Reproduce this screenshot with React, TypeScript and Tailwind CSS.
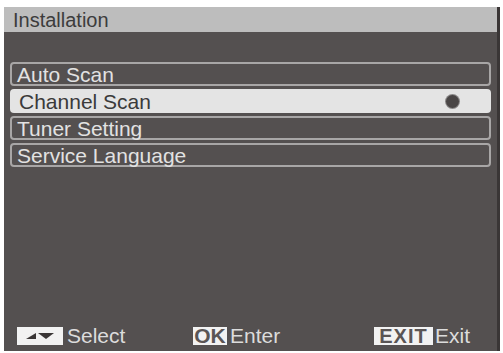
import React from 'react';

const items = ['Auto Scan', 'Channel Scan', 'Tuner Setting', 'Service Language'];
const selected = 1;

function Key({ children, className }: { children: React.ReactNode; className: string }) {
  return (
    <span className={`flex items-center justify-center bg-[#f2f2f2] text-[#5a5555] h-[18px] leading-none ${className}`}>
      {children}
    </span>
  );
}

export default function App() {
  return (
    <div className="w-[503px] h-[353px] bg-white pl-[4px] pr-[3px] pt-[7px] pb-[2px] font-['Liberation_Sans',Arial,sans-serif]">
      <div className="flex h-full flex-col border-r-[3px] border-[#3a3636] bg-[#545050]">
        {/* title bar */}
        <div className="flex h-[25px] items-center bg-[#bdbdbd] pl-[9px] text-[20px] leading-none text-[#3c3c3c]">
          Installation
        </div>

        {/* menu */}
        <div className="flex flex-col gap-[3px] pl-[6px] pr-[6px] pt-[30px]">
          {items.map((label, i) =>
            i === selected ? (
              <div
                key={label}
                className="flex h-[24px] items-center justify-between rounded-[4px] bg-[#e4e4e4] pl-[9px] pr-[32px] text-[21px] leading-none text-[#3a3a3a]"
              >
                <span>{label}</span>
                <span className="h-[13px] w-[13px] rounded-full bg-[#4a4646] shadow-[0_0_0_1px_#8a8888]" />
              </div>
            ) : (
              <div
                key={label}
                className="flex h-[24px] items-center rounded-[4px] border-[2px] border-[#a8a6a6] pl-[5px] text-[21px] leading-none text-[#e2e2e2]"
              >
                {label}
              </div>
            ),
          )}
        </div>

        {/* footer */}
        <div className="mt-auto flex items-center pb-[5px] text-[21px] leading-none text-[#dcdcdc]">
          <div className="flex w-[189px] items-center gap-[4px] pl-[13px]">
            <Key className="w-[46px]">
              <svg width="30" height="8" viewBox="0 0 30 8">
                <polygon points="1,7 11,1 11,7" fill="#3a3636" />
                <polygon points="13,1 29,1 21,7" fill="#3a3636" />
              </svg>
            </Key>
            <span>Select</span>
          </div>
          <div className="flex w-[181px] items-center gap-[3px]">
            <Key className="w-[34px] text-[21px] font-bold">OK</Key>
            <span>Enter</span>
          </div>
          <div className="flex items-center gap-[2px]">
            <Key className="w-[59px] text-[20px] font-bold tracking-[1px]">EXIT</Key>
            <span>Exit</span>
          </div>
        </div>
      </div>
    </div>
  );
}
